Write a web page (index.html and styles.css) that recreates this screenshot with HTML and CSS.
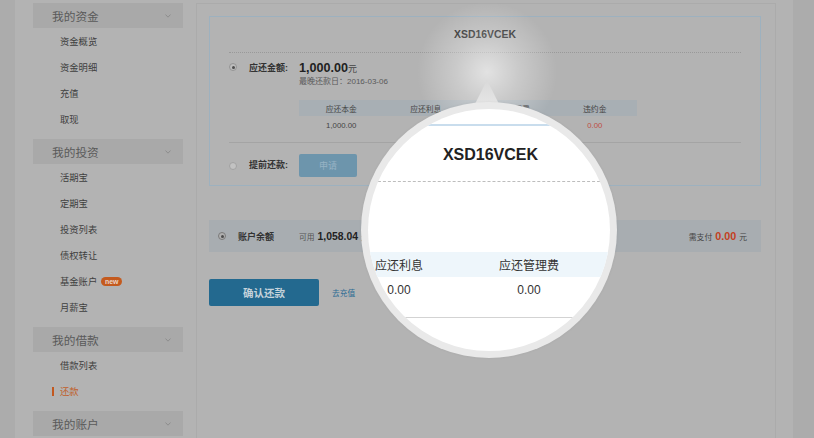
FILE: index.html
```html
<!DOCTYPE html>
<html lang="zh-CN">
<head>
<meta charset="utf-8">
<title>还款</title>
<link rel="stylesheet" href="styles.css">
</head>
<body>
<div class="page">
  <aside class="sidebar">
    <section class="nav-group">
      <div class="nav-head"><span>我的资金</span><svg class="chev" viewBox="0 0 6 4"><polyline points="0.5,0.5 3,3.2 5.5,0.5"/></svg></div>
      <ul class="nav-list">
        <li>资金概览</li>
        <li>资金明细</li>
        <li>充值</li>
        <li>取现</li>
      </ul>
    </section>
    <section class="nav-group">
      <div class="nav-head"><span>我的投资</span><svg class="chev" viewBox="0 0 6 4"><polyline points="0.5,0.5 3,3.2 5.5,0.5"/></svg></div>
      <ul class="nav-list">
        <li>活期宝</li>
        <li>定期宝</li>
        <li>投资列表</li>
        <li>债权转让</li>
        <li>基金账户<span class="badge-new">new</span></li>
        <li>月薪宝</li>
      </ul>
    </section>
    <section class="nav-group">
      <div class="nav-head"><span>我的借款</span><svg class="chev" viewBox="0 0 6 4"><polyline points="0.5,0.5 3,3.2 5.5,0.5"/></svg></div>
      <ul class="nav-list">
        <li>借款列表</li>
        <li class="active">还款</li>
      </ul>
    </section>
    <section class="nav-group">
      <div class="nav-head"><span>我的账户</span><svg class="chev" viewBox="0 0 6 4"><polyline points="0.5,0.5 3,3.2 5.5,0.5"/></svg></div>
    </section>
  </aside>

  <main class="main">
    <div class="loan-box">
      <div class="loan-title">XSD16VCEK</div>
      <div class="pay-row pay-row-due">
        <span class="radio checked"></span>
        <span class="pay-label">应还金额:</span>
        <div class="pay-body">
          <div class="amount"><b>1,000.00</b>元</div>
          <div class="due-date">最晚还款日：2016-03-06</div>
          <table class="due-table">
            <tr><th>应还本金</th><th>应还利息</th><th>应还管理费</th><th>违约金</th></tr>
            <tr><td>1,000.00</td><td>0.00</td><td>0.00</td><td class="red">0.00</td></tr>
          </table>
        </div>
      </div>
      <div class="pay-row pay-row-early">
        <span class="radio"></span>
        <span class="pay-label tall">提前还款:</span>
        <div class="pay-body"><button class="btn-apply">申请</button></div>
      </div>
    </div>

    <div class="balance-bar">
      <span class="radio checked dark"></span>
      <span class="bal-label">账户余额</span>
      <span class="bal-avail">可用<b>1,058.04</b>元</span>
      <span class="bal-need">需支付<b>0.00</b>元</span>
    </div>

    <div class="actions">
      <button class="btn-confirm">确认还款</button>
      <a class="recharge" href="#">去充值</a>
    </div>
  </main>
</div>

<div class="glow"></div>
<svg class="pointer" viewBox="0 0 34 30">
  <defs>
    <linearGradient id="pg" x1="0" y1="0" x2="0" y2="1">
      <stop offset="0" stop-color="#d9d9d9"/>
      <stop offset="1" stop-color="#e8e8e8"/>
    </linearGradient>
  </defs>
  <polygon points="17,0 2,30 32,30" fill="url(#pg)"/>
</svg>
<div class="magnifier">
  <div class="lens">
    <div class="lens-box">
      <div class="lens-title">XSD16VCEK</div>
      <table class="lens-table">
        <tr><th>应还利息</th><th>应还管理费</th><th></th></tr>
        <tr><td>0.00</td><td>0.00</td><td></td></tr>
      </table>
      <div class="lens-rule"></div>
    </div>
  </div>
</div>
</body>
</html>
```

FILE: styles.css
```css
* { box-sizing: border-box; margin: 0; padding: 0; }
html, body { width: 814px; height: 438px; overflow: hidden; }
body {
  position: relative;
  background: #acacac;
  font-family: "Liberation Sans", "Noto Sans CJK SC", sans-serif;
  color: #3d3d3d;
}

.page {
  display: flex;
  align-items: flex-start;
  width: 778px;
  height: 438px;
  margin-left: 15px;
  background: #b3b3b3;
}

/* sidebar */
.sidebar { flex: none; width: 150px; margin-left: 18px; padding-top: 3px; }
.nav-group { margin-bottom: 7px; }
.nav-head {
  height: 25px;
  display: flex;
  align-items: center;
  justify-content: space-between;
  padding: 0 12px 0 19px;
  background: #a9a9a9;
  font-size: 11.7px;
  color: #5a5a5a;
}
.chev { width: 6px; height: 4px; }
.chev polyline { fill: none; stroke: #8e8e8e; stroke-width: 1; }
.nav-list { list-style: none; }
.nav-list li {
  height: 26px;
  display: flex;
  align-items: center;
  padding-left: 27px;
  font-size: 9.3px;
  color: #3f3f3f;
}
.nav-list li.active { padding-left: 19px; color: #c0602b; }
.nav-list li.active::before {
  content: "";
  width: 2px;
  height: 9px;
  margin-right: 6px;
  background: #c2581f;
}
.badge-new {
  margin-left: 4px;
  width: 21px;
  height: 9px;
  border-radius: 5px;
  background: #c45a1e;
  color: #ecd6c8;
  font-size: 7px;
  font-weight: bold;
  line-height: 9px;
  text-align: center;
}

/* main */
.main {
  flex: none;
  width: 580px;
  height: 435px;
  margin: 3px 0 0 13px;
  padding: 12px 14px 0 12px;
  border: 1px solid #ababab;
  border-bottom: none;
}
.loan-box { border: 1px solid #9db1bf; }
.loan-title {
  height: 36px;
  margin: 0 19px;
  line-height: 35px;
  text-align: center;
  font-size: 10.4px;
  font-weight: bold;
  color: #222;
  border-bottom: 1px dotted #999;
}
.pay-row { display: flex; align-items: flex-start; margin: 0 19px; }
.pay-row-due { padding: 8px 0; border-bottom: 1px solid #a4a4a4; }
.pay-row-early { padding: 11px 0 8px; }
.radio {
  flex: none;
  width: 8px;
  height: 8px;
  margin: 2px 12px 0 0;
  display: grid;
  place-items: center;
  border: 1px solid #959595;
  border-radius: 50%;
  background: #bdbdbd;
}
.radio.checked::after {
  content: "";
  width: 3px;
  height: 3px;
  border-radius: 50%;
  background: #4d4d4d;
}
.pay-row-early .radio { margin-top: 7.5px; border-color: #a2a2a2; background: #c2c2c2; }
.pay-label {
  flex: none;
  width: 50px;
  font-size: 9px;
  font-weight: bold;
  line-height: 14px;
  color: #333;
}
.pay-label.tall { line-height: 23px; }
.pay-body { flex: 1; }
.amount { line-height: 14px; font-size: 9px; color: #444; }
.amount b { font-size: 12.6px; color: #222; }
.due-date { line-height: 12px; font-size: 8px; color: #5a5a5a; }
.due-table {
  width: 338px;
  margin-top: 12px;
  border-collapse: collapse;
  table-layout: fixed;
  text-align: center;
  font-size: 7.8px;
  color: #444;
}
.due-table th { height: 16px; padding: 0; font-weight: normal; background: #a8afb4; }
.due-table td { height: 18px; padding: 0; }
.due-table .red { color: #bf4e44; }
.btn-apply {
  width: 58px;
  height: 23px;
  border: none;
  border-radius: 2px;
  background: #6d95ac;
  color: #97b3c4;
  font-family: inherit;
  font-size: 9px;
}

.balance-bar {
  height: 32px;
  margin-top: 34px;
  display: flex;
  align-items: center;
  padding: 0 14px 0 9px;
  background: #a8adb1;
}
.balance-bar .radio { margin: 0 12px 0 0; border-color: #7a7a7a; background: #b0b0b0; }
.bal-label { width: 61px; font-size: 9px; font-weight: bold; color: #333; }
.bal-avail { font-size: 7.8px; color: #555; }
.bal-avail b { margin: 0 3px; font-size: 10.4px; color: #222; }
.bal-need { margin-left: auto; font-size: 7.8px; color: #444; }
.bal-need b { margin: 0 3px; font-size: 10.8px; color: #c3401f; }

.actions { margin-top: 27px; display: flex; align-items: center; }
.btn-confirm {
  width: 110px;
  height: 27px;
  border: none;
  border-radius: 2px;
  background: #23698f;
  color: #c6d3db;
  font-family: inherit;
  font-size: 10.5px;
  font-weight: bold;
}
.recharge { margin-left: 13px; font-size: 7.7px; color: #2b6b93; text-decoration: none; }

/* magnifier overlay */
.glow {
  position: absolute;
  left: 417px;
  top: 2px;
  width: 140px;
  height: 140px;
  border-radius: 50%;
  background: radial-gradient(closest-side, rgba(255,255,255,0.62), rgba(255,255,255,0.3) 45%, rgba(255,255,255,0) 100%);
}
.pointer { position: absolute; left: 470px; top: 80px; width: 34px; height: 30px; }
.magnifier {
  position: absolute;
  left: 361px;
  top: 102px;
  width: 256px;
  height: 256px;
  padding: 7px;
  border-radius: 50%;
  background: #e9e9e9;
  box-shadow: 0 0 3px rgba(0,0,0,0.06);
}
.lens {
  width: 242px;
  height: 242px;
  border-radius: 50%;
  overflow: hidden;
  background: #fff;
}
.lens-box { margin-top: 15px; border-top: 2px solid #c9dded; }
.lens-title {
  height: 56px;
  padding: 3px 0 0 3px;
  line-height: 52px;
  text-align: center;
  font-size: 16px;
  font-weight: bold;
  color: #222;
  border-bottom: 1px dashed #bdbdbd;
}
.lens-table {
  width: 390px;
  margin: 70px 0 0 -34px;
  border-collapse: collapse;
  table-layout: fixed;
  text-align: center;
  font-size: 12px;
  color: #333;
}
.lens-table th { height: 25px; padding: 0; font-weight: normal; background: #eef6fb; }
.lens-table td { height: 25px; padding: 0; }
.lens-rule { margin-top: 15px; border-top: 1px solid #d3d3d3; }
```
